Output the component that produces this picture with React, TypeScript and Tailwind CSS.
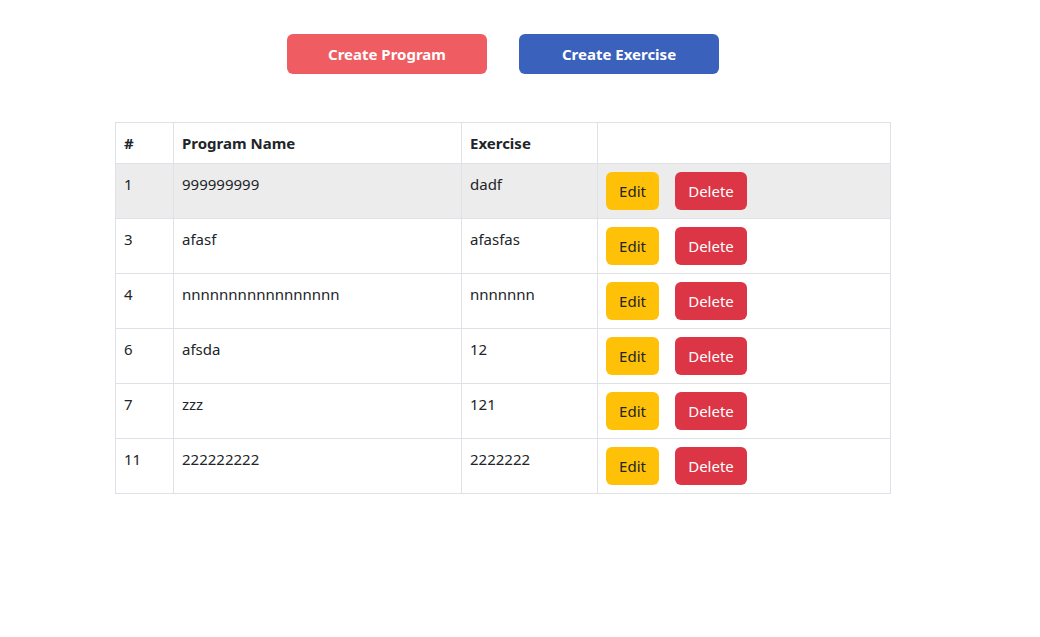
const rows = [
  { id: 1, name: "999999999", exercise: "dadf" },
  { id: 3, name: "afasf", exercise: "afasfas" },
  { id: 4, name: "nnnnnnnnnnnnnnnnn", exercise: "nnnnnnn" },
  { id: 6, name: "afsda", exercise: "12" },
  { id: 7, name: "zzz", exercise: "121" },
  { id: 11, name: "222222222", exercise: "2222222" },
];

export default function App() {
  return (
    <div
      className="min-h-[637px] bg-white text-[15px] leading-6 text-[#212529]"
      style={{ fontFamily: '"Segoe UI", "Noto Sans", sans-serif' }}
    >
      <div className="ml-[115px] w-[776px] pt-[34px]">
        <div className="flex justify-center gap-8">
          <button className="h-10 w-[200px] rounded-md bg-[#ef5c62] text-[15px] font-bold text-white">
            Create Program
          </button>
          <button className="h-10 w-[200px] rounded-md bg-[#3a61bc] text-[15px] font-bold text-white">
            Create Exercise
          </button>
        </div>

        <table className="mt-[48px] w-full border-collapse border border-[#dee2e6]">
          <thead>
            <tr className="text-left">
              <th className="w-[58px] border border-[#dee2e6] p-2 font-bold">#</th>
              <th className="w-[288px] border border-[#dee2e6] p-2 font-bold">Program Name</th>
              <th className="w-[136px] border border-[#dee2e6] p-2 font-bold">Exercise</th>
              <th className="border border-[#dee2e6] p-2"></th>
            </tr>
          </thead>
          <tbody>
            {rows.map((r, i) => (
              <tr key={r.id} className={i === 0 ? "bg-[#ececec]" : ""}>
                <td className="border border-[#dee2e6] p-2 align-top">{r.id}</td>
                <td className="border border-[#dee2e6] p-2 align-top">{r.name}</td>
                <td className="border border-[#dee2e6] p-2 align-top">{r.exercise}</td>
                <td className="border border-[#dee2e6] p-2 align-top">
                  <div className="flex gap-4">
                    <button className="h-[38px] w-[53px] rounded-md bg-[#ffc107] text-[#212529]">Edit</button>
                    <button className="h-[38px] w-[72px] rounded-md bg-[#dc3545] text-white">Delete</button>
                  </div>
                </td>
              </tr>
            ))}
          </tbody>
        </table>
      </div>
    </div>
  );
}
